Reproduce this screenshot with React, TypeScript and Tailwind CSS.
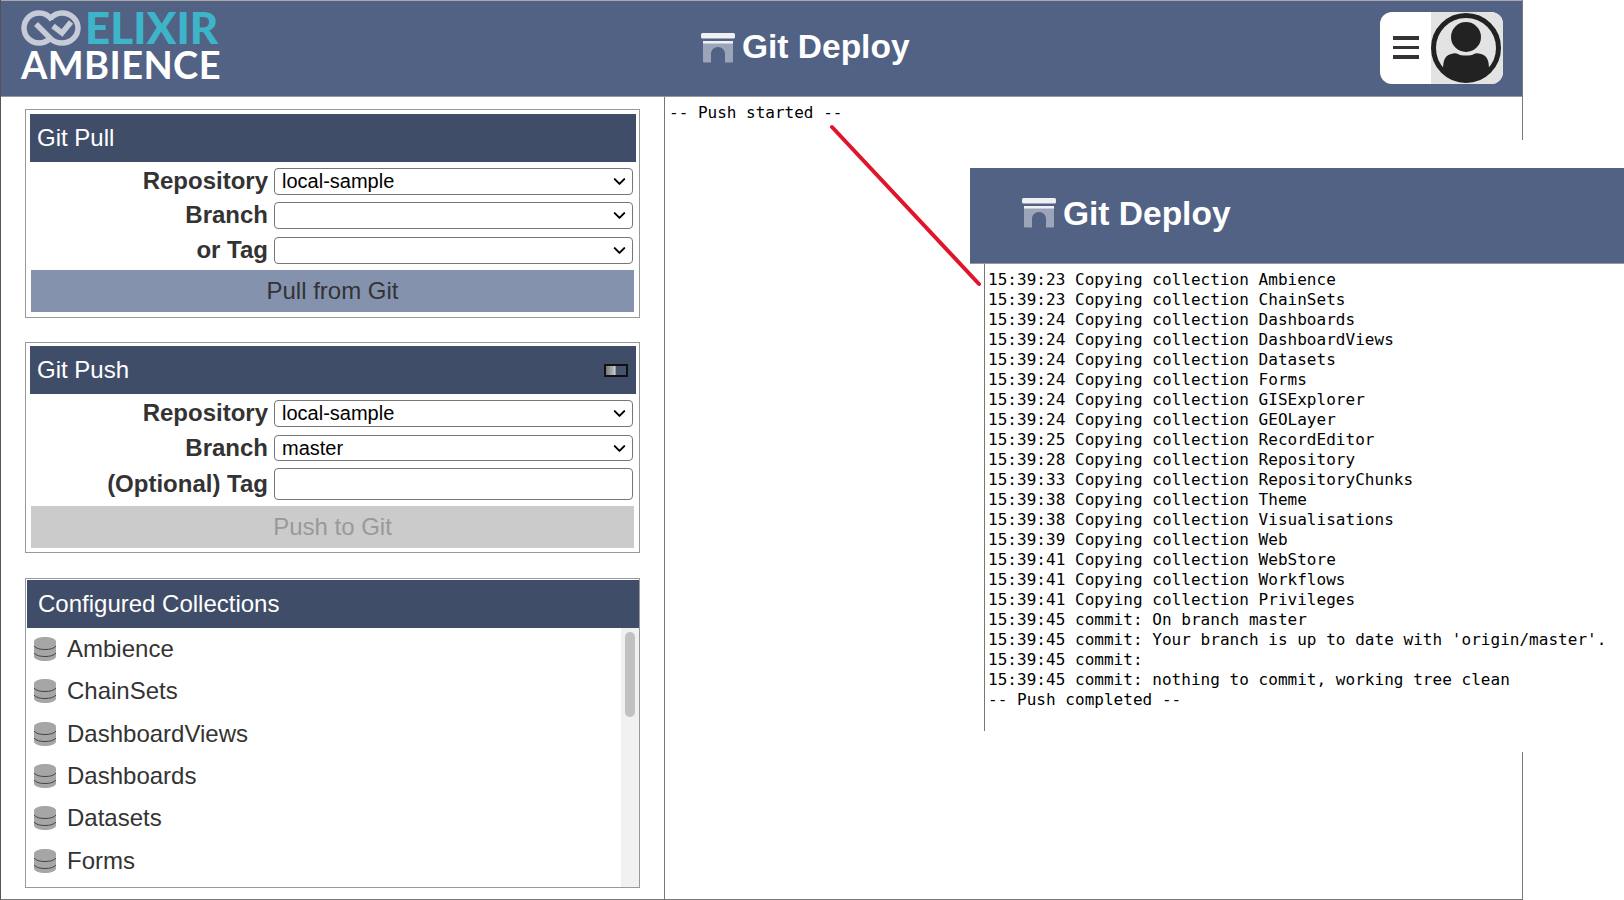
import { ChevronDown } from "lucide-react";

const collections = ["Ambience", "ChainSets", "DashboardViews", "Dashboards", "Datasets", "Forms"];

const logLines = [
  "15:39:23 Copying collection Ambience",
  "15:39:23 Copying collection ChainSets",
  "15:39:24 Copying collection Dashboards",
  "15:39:24 Copying collection DashboardViews",
  "15:39:24 Copying collection Datasets",
  "15:39:24 Copying collection Forms",
  "15:39:24 Copying collection GISExplorer",
  "15:39:24 Copying collection GEOLayer",
  "15:39:25 Copying collection RecordEditor",
  "15:39:28 Copying collection Repository",
  "15:39:33 Copying collection RepositoryChunks",
  "15:39:38 Copying collection Theme",
  "15:39:38 Copying collection Visualisations",
  "15:39:39 Copying collection Web",
  "15:39:41 Copying collection WebStore",
  "15:39:41 Copying collection Workflows",
  "15:39:41 Copying collection Privileges",
  "15:39:45 commit: On branch master",
  "15:39:45 commit: Your branch is up to date with 'origin/master'.",
  "15:39:45 commit:",
  "15:39:45 commit: nothing to commit, working tree clean",
  "-- Push completed --",
];

function InfinityLogo() {
  return (
    <svg width="60" height="36" viewBox="0 0 60 36" fill="none" stroke="#c6cbd7" strokeWidth="5.500" className="absolute left-[20px] top-[9px]">
      <path d="M31 10C28 5.500 23.500 3 18 3 9.500 3 3 10 3 18s6.500 15 15 15c4.500 0 8-1.500 11-4.500" />
      <path d="M15 14l15 15c3 2.800 7 4 11 4 9 0 16-7 16-15S50 3 41 3c-5 0-8.500 2-11.500 5.500" />
      <path d="M32 16l9 7 9-11" />
    </svg>
  );
}

function ArchIcon({ className }: { className: string }) {
  return (
    <svg width="34" height="30" viewBox="0 0 34 30" className={`shrink-0 ${className}`}>
      <path d="M2 8h30v20.500a1 1 0 0 1-1 1H24V21c0-4-3-7-7-7s-7 3-7 7v8.500H3a1 1 0 0 1-1-1z" fill="#9ba4b9" />
      <rect x="0" y="0" width="34" height="5.500" rx="1.500" fill="#eef0f4" />
      <rect x="2" y="8" width="30" height="2.500" fill="#eef0f4" />
    </svg>
  );
}

function DbIcon() {
  return (
    <svg width="22" height="24" viewBox="0 0 22 24" className="shrink-0">
      <path d="M0 4.500C0 2 5 0 11 0s11 2 11 4.500v15C22 22 17 24 11 24S0 22 0 19.500z" fill="#a6a6a6" />
      <path d="M0 9c2 2.500 6 3.500 11 3.500S20 11.500 22 9M0 16c2 2.500 6 3.500 11 3.500S20 18.500 22 16" fill="none" stroke="#444" strokeWidth="1" />
    </svg>
  );
}

function PanelHeader({ title, children }: { title: string; children?: React.ReactNode }) {
  return (
    <div className="flex h-[48px] items-center justify-between bg-[#3f4d68] pl-[7px] pr-[8px] text-[24px] text-white">
      <span>{title}</span>
      {children}
    </div>
  );
}

function Field({ label, value, mt, h = 27, input }: { label: string; value?: string; mt: string; h?: number; input?: boolean }) {
  return (
    <div className={`flex items-center ${mt}`}>
      <label className="h-[27px] w-[244px] pr-[6px] text-right text-[24px] font-bold leading-[25px] text-[#333]">{label}</label>
      {input ? (
        <input className="w-[359px] rounded-[4px] border border-[#767676] bg-white" style={{ height: h }} />
      ) : (
        <div className="relative w-[359px]">
          <select
            defaultValue={value}
            className="w-full appearance-none rounded-[4px] border border-[#767676] bg-white pl-[7px] text-[20px] leading-[25px] text-black"
            style={{ height: h }}
          >
            <option value={value}>{value}</option>
          </select>
          <ChevronDown size={19} strokeWidth={2.5} className="pointer-events-none absolute right-[4px] top-[4px] text-black" />
        </div>
      )}
    </div>
  );
}

export default function App() {
  return (
    <div className="relative h-[900px] w-[1624px] overflow-hidden bg-white font-['Liberation_Sans',sans-serif]">
      <div className="flex h-[900px] w-[1523px] flex-col border-b border-l border-r border-b-[#777] border-l-[#555] border-r-[#777]">
        <header className="flex h-[97px] shrink-0 items-center border-b border-t border-b-[#999] border-t-[#aaa] bg-[#516285]">
          <div className="relative h-full w-[700px] shrink-0">
            <InfinityLogo />
            <div className="absolute left-[84px] top-[8px] font-['Lato',sans-serif] text-[44px] font-black leading-[36px] text-[#3db4c8]">ELIXIR</div>
            <div className="absolute left-[20px] top-[44px] font-['Lato',sans-serif] text-[38px] font-bold leading-[38px] tracking-[0.4px] text-white">AMBIENCE</div>
          </div>
          <div className="flex items-center gap-[7px]">
            <ArchIcon className="mb-[2px]" />
            <span className="mb-[2px] text-[33.500px] font-bold text-white">Git Deploy</span>
          </div>
          <div className="mb-[2px] ml-auto mr-[19px] flex h-[72px] w-[123px] overflow-hidden rounded-[12px] bg-white">
            <div className="flex w-[51px] flex-col items-center justify-center gap-[6px]">
              <div className="h-[3.500px] w-[26px] bg-[#333]" />
              <div className="h-[3.500px] w-[26px] bg-[#333]" />
              <div className="h-[3.500px] w-[26px] bg-[#333]" />
            </div>
            <div className="flex flex-1 items-center justify-center bg-[#e3e3e3]">
              <svg width="72" height="72" viewBox="0 0 72 72">
                <circle cx="35" cy="36" r="32.500" fill="none" stroke="#222" strokeWidth="5" />
                <circle cx="35" cy="25" r="15" fill="#222" />
                <path d="M12 60c0-8 0-16 8-18 3-.800 5-1 7 0 3 2 13 2 16 0 2-1 4-.800 7 0 8 2 8 10 8 18-6 6-14 9.500-23 9.500S18 66 12 60z" fill="#222" />
              </svg>
            </div>
          </div>
        </header>
        <div className="flex min-h-0 flex-1">
          <aside className="flex w-[663px] shrink-0 flex-col pl-[24px] pt-[12px]">
            <section className="h-[209px] w-[615px] border border-[#999] py-[4px] pl-[4px] pr-[3px]">
              <PanelHeader title="Git Pull" />
              <Field label="Repository" value="local-sample" mt="mt-[6px]" />
              <Field label="Branch" mt="mt-[7px]" />
              <Field label="or Tag" mt="mt-[8px]" />
              <button className="ml-[1px] mt-[6px] h-[42px] w-[603px] bg-[#8492ae] text-[24px] text-[#333]">Pull from Git</button>
            </section>
            <section className="mt-[24px] h-[211px] w-[615px] border border-[#999] p-[3px] pl-[4px]">
              <PanelHeader title="Git Push">
                <div className="h-[13px] w-[24px] border-2 border-[#111] bg-[linear-gradient(90deg,#777_0%,#bbb_40%,#ddd_45%,#45536f_50%)]" />
              </PanelHeader>
              <Field label="Repository" value="local-sample" mt="mt-[6px]" />
              <Field label="Branch" value="master" mt="mt-[8px]" h={26} />
              <Field label="(Optional) Tag" mt="mt-[6px]" input h={32} />
              <button disabled className="ml-[1px] mt-[6px] h-[42px] w-[603px] bg-[#cbcbcb] text-[24px] text-[#999]">Push to Git</button>
            </section>
            <section className="mt-[25px] flex h-[310px] w-[615px] flex-col border border-[#999] pl-[1px] pt-[1px]">
              <div className="flex h-[48px] shrink-0 items-center bg-[#3f4d68] pl-[11px] text-[24px] text-white">Configured Collections</div>
              <div className="flex min-h-0 flex-1">
                <ul className="min-w-0 flex-1 overflow-hidden">
                  {collections.map((c) => (
                    <li key={c} className="flex h-[42.300px] items-center gap-[11px] pl-[7px] text-[24px] text-[#333]">
                      <DbIcon />
                      {c}
                    </li>
                  ))}
                </ul>
                <div className="w-[18px] shrink-0 bg-[#f1f1f1] px-[4px] pt-[4px]">
                  <div className="h-[85px] rounded-full bg-[#c1c1c1]" />
                </div>
              </div>
            </section>
          </aside>
          <pre className="min-w-0 flex-1 border-l border-[#777] pl-[4px] pt-[6px] font-['DejaVu_Sans_Mono',monospace] text-[16px] leading-[20px] text-black">-- Push started --</pre>
        </div>
      </div>

      {/* pasted-in zoom of the finished log, plus the red pointer line */}
      <div className="absolute left-[970px] top-[140px] flex h-[612px] w-[654px] flex-col bg-white pt-[28px]">
        <div className="flex h-[96px] shrink-0 items-center gap-[7px] border-b border-[#999] bg-[#516285] pl-[52px]">
          <ArchIcon className="mb-[6px]" />
          <span className="mb-[2px] text-[33.500px] font-bold text-white">Git Deploy</span>
        </div>
        <pre className="ml-[14px] h-[467px] border-l border-[#777] pl-[3px] pt-[6px] font-['DejaVu_Sans_Mono',monospace] text-[16px] leading-[20px] tracking-[0.03px] text-black">
          {logLines.join("\n")}
        </pre>
      </div>
      <svg className="absolute left-[825px] top-[120px]" width="160" height="170" viewBox="0 0 160 170">
        <line x1="7" y1="7" x2="154" y2="164" stroke="#e0142b" strokeWidth="4" strokeLinecap="round" />
      </svg>
    </div>
  );
}
